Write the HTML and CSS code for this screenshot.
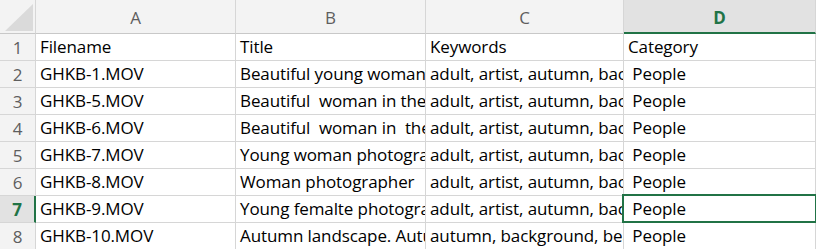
FILE: index.html
```html
<!DOCTYPE html>
<html lang="en">
<head>
  <meta charset="UTF-8" />
  <title>Sheet1</title>
  <link rel="stylesheet" href="styles.css">
</head>
<body>
  <div class="sheet">
    <div class="hd corner">
      <svg width="33" height="32" viewBox="0 0 33 32"><polygon points="3,30 31,30 31,3" fill="#dadada"/></svg>
    </div>
    <div class="hd col">A</div>
    <div class="hd col">B</div>
    <div class="hd col">C</div>
    <div class="hd col sel">D</div>

    <div class="hd row">1</div>
    <div class="cell">Filename</div>
    <div class="cell">Title</div>
    <div class="cell">Keywords</div>
    <div class="cell">Category</div>

    <div class="hd row">2</div>
    <div class="cell">GHKB-1.MOV</div>
    <div class="cell">Beautiful young woman photographer in the park</div>
    <div class="cell">adult, artist, autumn, background, beautiful</div>
    <div class="cell"> People</div>

    <div class="hd row">3</div>
    <div class="cell">GHKB-5.MOV</div>
    <div class="cell">Beautiful  woman in the autumn forest</div>
    <div class="cell">adult, artist, autumn, background, beautiful</div>
    <div class="cell"> People</div>

    <div class="hd row">4</div>
    <div class="cell">GHKB-6.MOV</div>
    <div class="cell">Beautiful  woman in  the autumn forest</div>
    <div class="cell">adult, artist, autumn, background, beautiful</div>
    <div class="cell"> People</div>

    <div class="hd row">5</div>
    <div class="cell">GHKB-7.MOV</div>
    <div class="cell">Young woman photographer in autumn</div>
    <div class="cell">adult, artist, autumn, background, beautiful</div>
    <div class="cell"> People</div>

    <div class="hd row">6</div>
    <div class="cell">GHKB-8.MOV</div>
    <div class="cell">Woman photographer </div>
    <div class="cell">adult, artist, autumn, background, beautiful</div>
    <div class="cell"> People</div>

    <div class="hd row sel">7</div>
    <div class="cell">GHKB-9.MOV</div>
    <div class="cell">Young femalte photographer</div>
    <div class="cell">adult, artist, autumn, background, beautiful</div>
    <div class="cell active"> People</div>

    <div class="hd row">8</div>
    <div class="cell">GHKB-10.MOV</div>
    <div class="cell">Autumn landscape. Autumn forest</div>
    <div class="cell">autumn, background, beautiful</div>
    <div class="cell"> People</div>
  </div>
</body>
</html>
```

FILE: styles.css
```css
body {
  margin: 0;
  background: #fff;
  font-family: "Open Sans", Lato, sans-serif;
  overflow: hidden;
}
.sheet {
  display: grid;
  grid-template-columns: 36px 200px 190px 198px 1fr;
  grid-template-rows: 34px repeat(8, 27px);
  width: 816px;
  height: 249px;
  overflow: hidden;
}
.hd {
  background: #f3f3f3;
  color: #5e5e5e;
  font-size: 17px;
  border-right: 1px solid #d6d6d6;
  border-bottom: 1px solid #d6d6d6;
  box-sizing: border-box;
  display: flex;
  align-items: center;
  justify-content: center;
}
.corner {
  align-items: flex-end;
  justify-content: flex-end;
  border-bottom-color: #c8c8c8;
}
.col {
  padding-top: 2px;
  border-bottom-color: #c8c8c8;
}
.col.sel {
  background: #e2e2e2;
  color: #217346;
  font-weight: bold;
  border-bottom: 2px solid #217346;
}
.row {
  padding-top: 1px;
}
.row.sel {
  background: #e2e2e2;
  color: #217346;
  font-weight: bold;
  border-right: 2px solid #217346;
}
.cell {
  font-size: 17px;
  letter-spacing: -0.1px;
  color: #000;
  white-space: pre;
  overflow: hidden;
  padding: 2px 0 0 4px;
  border-right: 1px solid #d6d6d6;
  border-bottom: 1px solid #d6d6d6;
  box-sizing: border-box;
  line-height: 22px;
}
.active {
  position: relative;
  overflow: visible;
}
.active::after {
  content: "";
  position: absolute;
  top: -2px;
  left: -2px;
  right: -2px;
  bottom: -1px;
  border: 2px solid #217346;
}
```
